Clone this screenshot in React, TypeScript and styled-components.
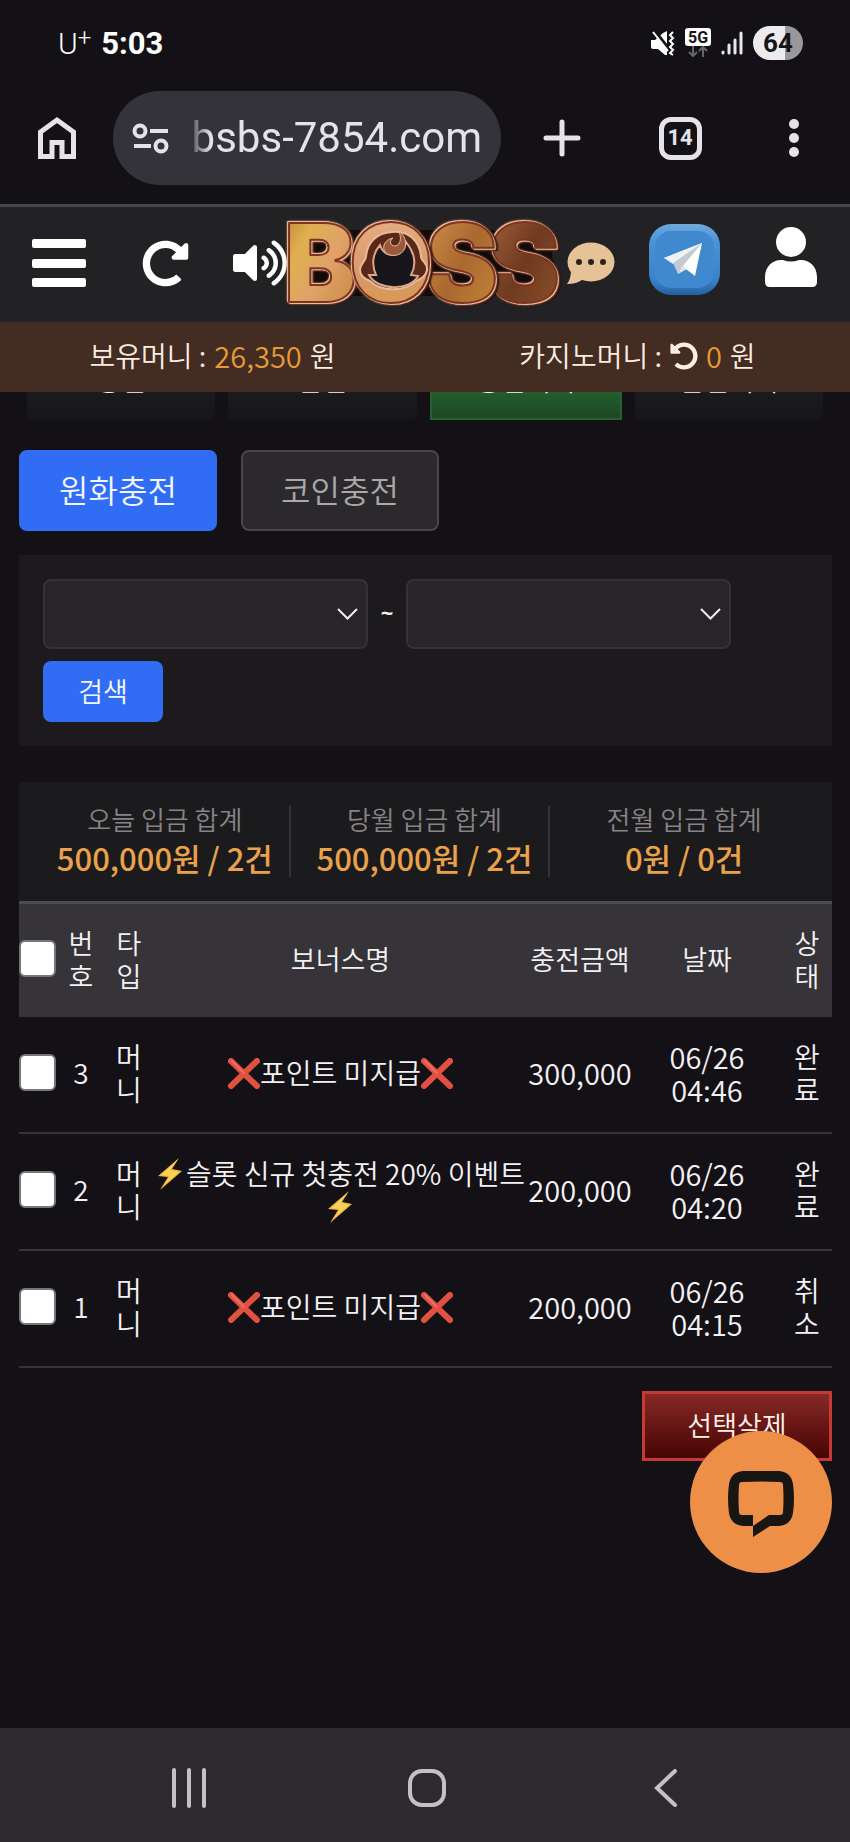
import React from "react";
import styled, { createGlobalStyle } from "styled-components";
import { FaRedoAlt, FaUndoAlt, FaVolumeUp } from "react-icons/fa";

const GlobalStyle = createGlobalStyle`
  *, *::before, *::after { box-sizing: border-box; }
  body { margin: 0; background: #131115; }
  body, button, input, select {
    font-family: "Noto Sans CJK KR", "Noto Sans", sans-serif;
    color: #f4f1f4;
  }
  button { border: 0; padding: 0; background: none; cursor: pointer; font-weight: 350; }
  svg { display: block; }
`;

const Screen = styled.div`
  min-height: 100vh;
  display: flex;
  flex-direction: column;
  font-size: 27px;
  font-weight: 350;
  line-height: 33px;
`;

/* ---------- phone status bar ---------- */

const StatusBar = styled.div`
  height: 90px;
  padding: 0 47px 4px 58px;
  display: flex;
  align-items: center;
  justify-content: space-between;
  font-family: Roboto, sans-serif;
  color: #fff;
`;

const StatusGroup = styled.div<{ $gap: number }>`
  display: flex;
  align-items: center;
  gap: ${(p) => p.$gap}px;
`;

const Carrier = styled.span`
  font-size: 30px;
  font-weight: 300;
  sup { font-size: 24px; line-height: 0; vertical-align: 8px; }
`;

const Clock = styled.span`
  font-size: 31px;
  font-weight: 700;
`;

const Battery = styled.span`
  width: 50px;
  height: 34px;
  border-radius: 17px;
  background: linear-gradient(90deg, #ececee 64%, #99999c 64%);
  color: #151419;
  font-size: 26px;
  font-weight: 700;
  line-height: 34px;
  text-align: center;
`;

/* ---------- browser toolbar ---------- */

const BrowserBar = styled.div`
  height: 117px;
  padding-bottom: 18px;
  display: grid;
  grid-template-columns: 113px 1fr 122px 114px 113px;
  align-items: center;
  border-bottom: 3px solid #47464b;
  color: #e5e2ea;
`;

const BarButton = styled.button`
  height: 94px;
  display: grid;
  place-items: center;
  color: inherit;
`;

const AddressPill = styled.div`
  height: 94px;
  border-radius: 47px;
  background: #35333a;
  display: flex;
  align-items: center;
  gap: 18px;
  padding: 0 19px;
  overflow: hidden;
`;

const Url = styled.span`
  flex: 1;
  display: flex;
  justify-content: flex-end;
  overflow: hidden;
  font: 400 42px/56px Roboto, sans-serif;
  white-space: nowrap;
  mask-image: linear-gradient(90deg, transparent 0, #000 24px);
`;

const TabCount = styled.span`
  width: 43px;
  height: 43px;
  border: 5px solid #e5e2ea;
  border-radius: 12px;
  display: grid;
  place-items: center;
  font: 700 22px/24px Roboto, sans-serif;
`;

/* ---------- site header ---------- */

const SiteHeader = styled.header`
  height: 115px;
  padding: 0 18px 3px 0;
  display: grid;
  grid-template-columns: 118px 94px 1fr 275px 57px 131px 82px;
  align-items: center;
  background: #222124;
`;

const HeaderButton = styled.button<{ $end?: boolean; $raised?: boolean }>`
  display: grid;
  place-items: center;
  justify-content: ${(p) => (p.$end ? "end" : "center")};
  padding-bottom: ${(p) => (p.$raised ? 8 : 0)}px;
  color: #fff;
`;

const BurgerLines = styled.span`
  width: 54px;
  height: 48px;
  display: flex;
  flex-direction: column;
  justify-content: space-between;
  i { height: 9px; border-radius: 2px; background: #fff; }
`;

const BalanceBar = styled.div`
  height: 70px;
  padding-bottom: 3px;
  display: flex;
  align-items: center;
  background: #432c22;
  color: #fdeee0;
  font-size: 28px;
`;

const Balance = styled.div`
  flex: 1;
  display: flex;
  align-items: center;
  justify-content: center;
  gap: 8px;
`;

const Amount = styled.span`
  color: #e59a35;
  font-size: 29px;
`;

/* ---------- page ---------- */

const TabStrip = styled.nav`
  height: 28px;
  padding: 0 27px;
  display: flex;
  align-items: flex-end;
  gap: 13px;
  overflow: hidden;
`;

const TopTab = styled.button<{ $active?: boolean }>`
  flex: 1;
  height: 70px;
  flex-shrink: 0;
  padding-bottom: 12px;
  border-radius: ${(p) => (p.$active ? 0 : 6)}px;
  border: ${(p) => (p.$active ? "2px solid #28602f" : "0")};
  background: ${(p) =>
    p.$active
      ? "linear-gradient(#2f7d3d, #1c4823)"
      : "linear-gradient(#232225, #161518)"};
  font-size: 27px;
  line-height: 33px;
`;

const Content = styled.main`
  padding: 30px 18px 24px 19px;
`;

const KindRow = styled.div`
  display: flex;
  gap: 24px;
`;

const KindButton = styled.button<{ $active?: boolean }>`
  width: 198px;
  height: 81px;
  padding-bottom: 4px;
  border-radius: 8px;
  border: 2px solid ${(p) => (p.$active ? "#306df4" : "#48464a")};
  background: ${(p) => (p.$active ? "#306df4" : "#2c292d")};
  color: ${(p) => (p.$active ? "#f3f7ff" : "#aaa8ab")};
  font-size: 32px;
`;

const SearchPanel = styled.form`
  margin-top: 24px;
  padding: 24px 24px;
  display: flex;
  flex-wrap: wrap;
  align-items: center;
  gap: 12px;
  background: #1c1a1d;
`;

const DateField = styled.span`
  width: 325px;
  height: 70px;
  display: grid;
  align-items: center;
  border: 2px solid #343236;
  border-radius: 8px;
  background: #272528;

  > * { grid-area: 1 / 1; }
  > svg { justify-self: end; margin-right: 8px; pointer-events: none; }
`;

const DateSelect = styled.select`
  width: 100%;
  height: 66px;
  padding: 0 40px 0 16px;
  border: 0;
  background: transparent;
  appearance: none;
  font-size: 27px;
`;

const Tilde = styled.span`
  width: 14px;
  padding-bottom: 4px;
  text-align: center;
  font: 700 22px/33px "Noto Sans", sans-serif;
`;

const SearchButton = styled.button`
  width: 120px;
  height: 61px;
  padding-bottom: 2px;
  border-radius: 8px;
  background: #306df4;
  color: #f3f7ff;
  font-size: 27px;
`;

const Summary = styled.section`
  margin-top: 36px;
  padding: 24px 22px;
  display: grid;
  grid-template-columns: repeat(3, 1fr);
  gap: 10px;
  background: #1b1a1c;
`;

const SummaryItem = styled.div`
  height: 71px;
  text-align: center;
  white-space: nowrap;
  border-right: 2px solid #333235;
  &:last-child { border-color: transparent; }
`;

const SummaryLabel = styled.div`
  color: #868487;
  font-size: 26px;
  line-height: 26px;
`;

const SummaryValue = styled.div`
  color: #e9a24a;
  font-size: 31px;
  font-weight: 500;
  line-height: 52px;
`;

const History = styled.table`
  width: 100%;
  table-layout: fixed;
  border-spacing: 0;
  text-align: center;

  th, td {
    padding: 0;
    font-weight: 350;
    vertical-align: middle;
  }
  th {
    height: 116px;
    padding-bottom: 4px;
    border-top: 3px solid #4e4c50;
    background: #363438;
    font-size: 27px;
  }
  td {
    height: 117px;
    padding-bottom: 4px;
    border-bottom: 2px solid #353337;
    font-size: 28px;
  }
`;

const Narrow = styled.span`
  display: block;
  width: 28px;
  margin: 0 auto;
`;

const Num = styled.span`
  display: block;
  font-size: 29px;
  line-height: 33px;
`;

const Tick = styled.input`
  display: block;
  width: 37px;
  height: 37px;
  margin: 0;
  appearance: none;
  border: 2px solid #767579;
  border-radius: 6px;
  background: #fff;
  &:checked { background: #306df4; }
`;

const Mark = styled.svg`
  display: inline-block;
  vertical-align: -5px;
`;

const Actions = styled.div`
  margin-top: 23px;
  display: flex;
  justify-content: flex-end;
`;

const DeleteButton = styled.button`
  width: 190px;
  height: 70px;
  padding-bottom: 4px;
  border: 3px solid #c53a33;
  background: linear-gradient(#882927, #450403);
  color: #fff3ea;
  font-size: 27px;
`;

const ChatButton = styled.button`
  position: fixed;
  right: 18px;
  bottom: 269px;
  width: 142px;
  height: 142px;
  padding: 4px 0 0 0;
  border-radius: 50%;
  background: #ee8f48;
  display: grid;
  place-items: center;
`;

const NavBar = styled.nav`
  margin-top: auto;
  height: 114px;
  padding: 6px 65px 0 70px;
  display: grid;
  grid-template-columns: repeat(3, 1fr);
  background: #2c2a2d;
  color: #c4c1c5;
`;

const NavButton = styled.button`
  display: grid;
  place-items: center;
  color: inherit;
`;

/* ---------- drawings ---------- */

const MuteIcon = () => (
  <svg width="24" height="26" viewBox="0 0 24 26" fill="none">
    <path d="M0 10h4l8-7 4-2v24h-2l-7-6H2q-2 0-2-2z" fill="#fff" />
    <path d="M4 1l14 18" stroke="#151419" strokeWidth="3" />
    <path d="M2 2l15 19" stroke="#fff" strokeWidth="2" />
    <path d="M22 2l-3 3 3 3-3 3 3 3-3 3 3 3-3 3 3 2" stroke="#fff" strokeWidth="2" />
  </svg>
);

const FiveGIcon = () => (
  <svg width="26" height="30" viewBox="0 0 26 30" fill="none">
    <rect width="26" height="18" rx="3" fill="#fff" />
    <text x="13" y="15" textAnchor="middle" fontFamily="Roboto" fontWeight="700" fontSize="16" fill="#151419">5G</text>
    <path d="M8 18v10M4 24l4 4 4-4M18 29V19M14 23l4-4 4 4" stroke="#66656a" strokeWidth="2" />
  </svg>
);

const SignalIcon = () => (
  <svg width="22" height="24" viewBox="0 0 22 24" stroke="#e8e8ea" strokeWidth="3" strokeLinecap="round">
    <path d="M2 22v-1M8 22v-8M14 22V9" />
    <path d="M20 22V2" />
  </svg>
);

const HomeIcon = () => (
  <svg width="40" height="44" viewBox="0 0 40 44" fill="none" stroke="currentColor" strokeWidth="5">
    <path d="M3.5 40.500V16L20 4l16.500 12v24.500H25V26.500H15v14z" />
  </svg>
);

const TuneIcon = () => (
  <svg width="37" height="31" viewBox="0 0 37 31" fill="none" stroke="#e5e2ea" strokeWidth="4" strokeLinecap="butt">
    <circle cx="8" cy="8" r="5.500" />
    <path d="M18 8h18M2 23h17" />
    <circle cx="29" cy="23" r="5.500" />
  </svg>
);

const PlusIcon = () => (
  <svg width="38" height="38" viewBox="0 0 38 38" stroke="currentColor" strokeWidth="5" strokeLinecap="round">
    <path d="M19 3v32M3 19h32" />
  </svg>
);

const DotsIcon = () => (
  <svg width="10" height="40" viewBox="0 0 10 40" fill="currentColor">
    <circle cx="5" cy="6" r="5" />
    <circle cx="5" cy="20" r="5" />
    <circle cx="5" cy="34" r="5" />
  </svg>
);

const LogoSvg = styled.svg`
  overflow: visible;
  font: 900 108px Inter, sans-serif;
  text {
    stroke: #7e3420;
    stroke-width: 2px;
    stroke-linejoin: round;
    filter: drop-shadow(1px 1px 0 #ecbc9c) drop-shadow(-1px -1px 0 #ecbc9c)
      drop-shadow(0 0 1px #c98b68) drop-shadow(2px 1px 0 #2a100b);
  }
`;

const logoLetters = [
  { ch: "B", x: -3, fill: "goldB" },
  { ch: "S", x: 201, fill: "bronzeS" },
  { ch: "S", x: 139, fill: "goldS" },
  { ch: "O", x: 62, fill: "goldO" },
];

const BossLogo = () => (
  <LogoSvg width="275" height="90" viewBox="0 0 275 90" role="img" aria-label="BOSS">
    <defs>
      <linearGradient id="goldB" x1="0" y1="0" x2="1" y2="1">
        <stop offset="0" stopColor="#b5793b" />
        <stop offset=".3" stopColor="#dfb04e" />
        <stop offset=".55" stopColor="#e0a268" />
        <stop offset="1" stopColor="#c3853b" />
      </linearGradient>
      <linearGradient id="goldO" x1="0" y1="0" x2="0" y2="1">
        <stop offset="0" stopColor="#e9b58a" />
        <stop offset=".6" stopColor="#d7996a" />
        <stop offset="1" stopColor="#d69a3f" />
      </linearGradient>
      <linearGradient id="goldS" x1="0" y1="0" x2="1" y2="1">
        <stop offset="0" stopColor="#d3964f" />
        <stop offset=".5" stopColor="#a9682f" />
        <stop offset="1" stopColor="#c98a3c" />
      </linearGradient>
      <linearGradient id="bronzeS" x1="0" y1="0" x2="1" y2="1">
        <stop offset="0" stopColor="#a8683f" />
        <stop offset=".5" stopColor="#6f3a20" />
        <stop offset="1" stopColor="#8f552b" />
      </linearGradient>
    </defs>
    <path d="M20 12h245v28l8 20-8 18H20z" fill="#120a09" />
    {logoLetters.map((l) => (
      <text key={l.x} x={l.x} y="84" fill={`url(#${l.fill})`}>{l.ch}</text>
    ))}
    <path d="M105 14c17-2 28 10 29 25 1 5 7 6 6 13-1 7-7 9-11 11-11 11-35 11-46 0-5-2-10-5-10-11 0-6 5-8 6-13 1-15 11-24 26-25z" fill="#5a2818" stroke="#e9b999" strokeWidth="2" />
    <path d="M89 57c-5-11-3-22 4-30 3 9 10 12 18 8 5-2 7-6 8-11 8 10 11 22 5 33l7 1c-7 15-41 15-49-1z" fill="#18161a" stroke="#d9a68a" strokeWidth="2" />
    <path d="M112 13c3 9 1 14-4 15-5 0-6-5-2-8-9 2-11 9-8 14 6 6 17 4 20-4 2-7-1-13-6-17z" fill="#9a5a3a" stroke="#e9b999" strokeWidth="1" />
  </LogoSvg>
);

const BubbleIcon = () => (
  <svg width="48" height="43" viewBox="0 0 48 43">
    <ellipse cx="24" cy="20" rx="23.500" ry="19.500" fill="#e6c297" />
    <path d="M4 28q0 9-4 14 11 0 16-5z" fill="#e6c297" />
    <g fill="#2b211c">
      <circle cx="12" cy="20" r="3" />
      <circle cx="24" cy="20" r="3" />
      <circle cx="36" cy="20" r="3" />
    </g>
  </svg>
);

const TelegramIcon = () => (
  <svg width="71" height="71" viewBox="0 0 71 71">
    <defs>
      <linearGradient id="tgEdge" x1="0" y1="0" x2="0" y2="1">
        <stop offset="0" stopColor="#6fa9dc" />
        <stop offset=".25" stopColor="#4a93d6" />
        <stop offset=".8" stopColor="#3a80c6" />
        <stop offset="1" stopColor="#24619f" />
      </linearGradient>
    </defs>
    <rect width="71" height="71" rx="22" fill="url(#tgEdge)" />
    <rect x="6" y="7" width="59" height="57" rx="16" fill="#4089cf" />
    <path d="M15 34l38-15-7 33-13-10z" fill="#fff" />
    <path d="M15 34l38-15-29 21z" fill="#eef1f5" />
    <path d="M24 39l29-20-20 24-4 7z" fill="#c3c9d3" />
    <path d="M29 50l4-8 5 3z" fill="#e3e7ed" />
  </svg>
);

const UserIcon = () => (
  <svg width="52" height="66" viewBox="0 0 52 66" fill="#fff">
    <circle cx="26" cy="16" r="15" />
    <path d="M18 34q8 3 16 0c10-1 18 6 18 17v5q0 5-5 5H5q-5 0-5-5v-5c0-11 8-18 18-17z" />
  </svg>
);

const ChevronIcon = () => (
  <svg width="21" height="12" viewBox="0 0 21 12" fill="none" stroke="#f0eef1" strokeWidth="2">
    <path d="M1 1l9.500 9.500L20 1" />
  </svg>
);

const CrossMark = () => (
  <Mark width="32" height="31" viewBox="0 0 32 31" role="img" aria-label="X">
    <path d="M3 3l26 25M29 3L3 28" stroke="#e2513f" strokeWidth="6" strokeLinecap="round" />
    <path d="M4 3l12 12" stroke="#ea6f66" strokeWidth="2" strokeLinecap="round" />
  </Mark>
);

const BoltMark = () => (
  <Mark width="30" height="32" viewBox="0 0 30 32" role="img" aria-label="번개">
    <path d="M23 0L2 18l10 1L4 32l22-19-10-2z" fill="#f6b93b" />
    <path d="M22 1L6 17l8 1L8 27l15-13-9-2z" fill="#fbd355" />
  </Mark>
);

const LiveChatIcon = () => (
  <svg width="66" height="66" viewBox="0 0 66 66">
    <path
      fillRule="evenodd"
      d="M15 0Q33-1 51 0Q63 1 65 13Q67 27 65 42Q63 54 51 55H42L25 66V44H14Q11 44 11 41Q10 28 11 14Q11 11 14 11Q33 10 52 11Q55 11 55 14Q56 28 55 41Q55 44 52 44H41L25 55H15Q3 54 1 42Q-1 27 1 13Q3 1 15 0Z"
      fill="#181512"
    />
  </svg>
);

/* ---------- data ---------- */

const topTabs = ["충전", "환전", "충전내역", "환전내역"];

const totals = [
  { label: "오늘 입금 합계", value: "500,000원 / 2건" },
  { label: "당월 입금 합계", value: "500,000원 / 2건" },
  { label: "전월 입금 합계", value: "0원 / 0건" },
];

const noPoint = (<><CrossMark />포인트 미지급<CrossMark /></>);
const slotEvent = (<><BoltMark />슬롯 신규 첫충전 20% 이벤트<BoltMark /></>);

const rows = [
  { no: 3, bonus: noPoint, amount: "300,000", time: "04:46", state: "완료" },
  { no: 2, bonus: slotEvent, amount: "200,000", time: "04:20", state: "완료" },
  { no: 1, bonus: noPoint, amount: "200,000", time: "04:15", state: "취소" },
];

export default function App() {
  return (
    <Screen>
      <GlobalStyle />
      <StatusBar>
        <StatusGroup $gap={10}>
          <Carrier>U<sup>+</sup></Carrier>
          <Clock>5:03</Clock>
        </StatusGroup>
        <StatusGroup $gap={10}>
          <MuteIcon />
          <FiveGIcon />
          <SignalIcon />
          <Battery>64</Battery>
        </StatusGroup>
      </StatusBar>

      <BrowserBar>
        <BarButton aria-label="홈"><HomeIcon /></BarButton>
        <AddressPill>
          <TuneIcon />
          <Url>bsbs-7854.com</Url>
        </AddressPill>
        <BarButton aria-label="새 탭"><PlusIcon /></BarButton>
        <BarButton aria-label="탭 목록"><TabCount>14</TabCount></BarButton>
        <BarButton aria-label="더보기"><DotsIcon /></BarButton>
      </BrowserBar>

      <SiteHeader>
        <HeaderButton aria-label="메뉴"><BurgerLines><i /><i /><i /></BurgerLines></HeaderButton>
        <HeaderButton aria-label="새로고침"><FaRedoAlt size={47} /></HeaderButton>
        <HeaderButton aria-label="소리" $end><FaVolumeUp size={54} /></HeaderButton>
        <BossLogo />
        <HeaderButton aria-label="채팅"><BubbleIcon /></HeaderButton>
        <HeaderButton aria-label="텔레그램" $raised><TelegramIcon /></HeaderButton>
        <HeaderButton aria-label="내 정보" $raised><UserIcon /></HeaderButton>
      </SiteHeader>

      <BalanceBar>
        <Balance>
          <span>보유머니 :</span>
          <Amount>26,350</Amount>
          <span>원</span>
        </Balance>
        <Balance>
          <span>카지노머니 :</span>
          <FaUndoAlt size={28} />
          <Amount>0</Amount>
          <span>원</span>
        </Balance>
      </BalanceBar>

      <TabStrip>
        {topTabs.map((t, i) => (
          <TopTab key={t} $active={i === 2}>{t}</TopTab>
        ))}
      </TabStrip>

      <Content>
        <KindRow>
          <KindButton $active>원화충전</KindButton>
          <KindButton>코인충전</KindButton>
        </KindRow>

        <SearchPanel onSubmit={(e: React.FormEvent) => e.preventDefault()}>
          <DateField>
            <DateSelect aria-label="시작일"><option value="" /></DateSelect>
            <ChevronIcon />
          </DateField>
          <Tilde>~</Tilde>
          <DateField>
            <DateSelect aria-label="종료일"><option value="" /></DateSelect>
            <ChevronIcon />
          </DateField>
          <SearchButton type="submit">검색</SearchButton>
        </SearchPanel>

        <Summary>
          {totals.map((t) => (
            <SummaryItem key={t.label}>
              <SummaryLabel>{t.label}</SummaryLabel>
              <SummaryValue>{t.value}</SummaryValue>
            </SummaryItem>
          ))}
        </Summary>

        <History>
          <colgroup>
            <col width="38" />
            <col width="48" />
            <col width="48" />
            <col />
            <col width="104" />
            <col width="150" />
            <col width="50" />
          </colgroup>
          <thead>
            <tr>
              <th><Tick type="checkbox" aria-label="전체 선택" /></th>
              <th><Narrow>번호</Narrow></th>
              <th><Narrow>타입</Narrow></th>
              <th>보너스명</th>
              <th>충전금액</th>
              <th>날짜</th>
              <th><Narrow>상태</Narrow></th>
            </tr>
          </thead>
          <tbody>
            {rows.map((r) => (
              <tr key={r.no}>
                <td><Tick type="checkbox" aria-label={`${r.no}번 선택`} /></td>
                <td>{r.no}</td>
                <td><Narrow>머니</Narrow></td>
                <td>{r.bonus}</td>
                <td><Num>{r.amount}</Num></td>
                <td><Num>06/26</Num><Num>{r.time}</Num></td>
                <td><Narrow>{r.state}</Narrow></td>
              </tr>
            ))}
          </tbody>
        </History>

        <Actions>
          <DeleteButton>선택삭제</DeleteButton>
        </Actions>
      </Content>

      <ChatButton aria-label="상담 채팅"><LiveChatIcon /></ChatButton>

      <NavBar>
        <NavButton aria-label="최근 앱">
          <svg width="34" height="42" viewBox="0 0 34 42" stroke="currentColor" strokeWidth="4" strokeLinecap="round">
            <path d="M2 3v36M17 3v36M32 3v36" />
          </svg>
        </NavButton>
        <NavButton aria-label="홈 화면">
          <svg width="38" height="38" viewBox="0 0 38 38" fill="none" stroke="currentColor" strokeWidth="4">
            <rect x="2" y="2" width="34" height="34" rx="12" />
          </svg>
        </NavButton>
        <NavButton aria-label="뒤로">
          <svg width="24" height="38" viewBox="0 0 24 38" fill="none" stroke="currentColor" strokeWidth="4" strokeLinecap="round">
            <path d="M21 2L3 19l18 17" />
          </svg>
        </NavButton>
      </NavBar>
    </Screen>
  );
}
